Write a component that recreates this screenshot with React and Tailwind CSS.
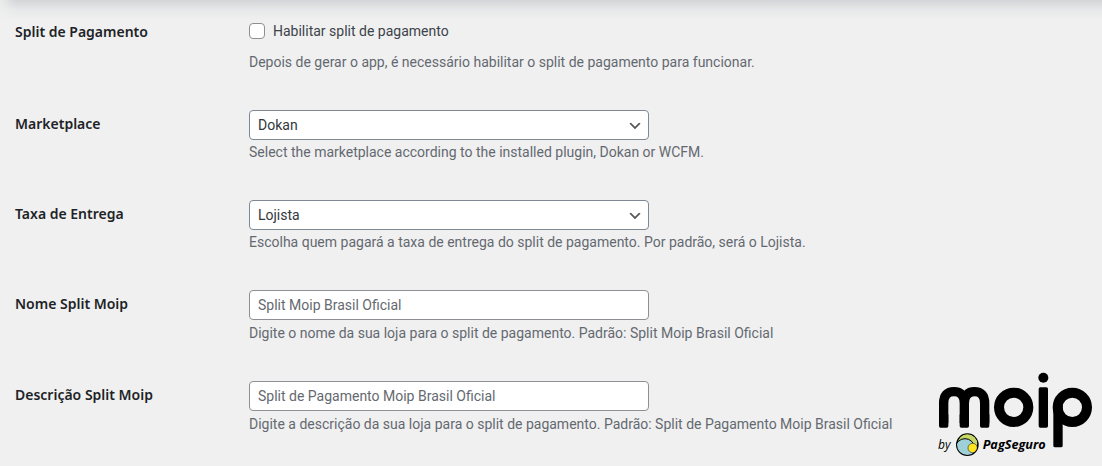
function SelectField({ id, value, options }) {
  return (
    <div className="relative w-full max-w-[400px]">
      <select
        id={id}
        defaultValue={value}
        className="block h-[30px] w-full appearance-none rounded-[4px] border border-[#7e8993] bg-white pl-2 pr-6 text-[14px] leading-[28px] text-[#32373c]"
      >
        {options.map((option) => (
          <option key={option}>{option}</option>
        ))}
      </select>
      <svg
        aria-hidden="true"
        viewBox="0 0 20 20"
        className="pointer-events-none absolute right-[6px] top-[8px] h-4 w-4"
      >
        <path d="M5 6l5 5 5-5 2 1-7 7-7-7 2-1z" fill="#555" />
      </svg>
    </div>
  );
}

function TextField({ id, placeholder }) {
  return (
    <input
      id={id}
      type="text"
      placeholder={placeholder}
      className="mb-px block h-[30px] w-full max-w-[400px] rounded-[4px] border border-[#8c8f94] bg-white px-2 text-[14px] text-[#2c3338] placeholder:text-[#646970] placeholder:opacity-100"
    />
  );
}

function Row({ id, label, description, children }) {
  return (
    <div className="flex">
      <div className="w-[234px] shrink-0 pt-1">
        <label
          htmlFor={id}
          className="block font-['Noto_Sans',sans-serif] text-[14px] font-semibold leading-[20px] text-[#1d2327]"
        >
          {label}
        </label>
      </div>
      <div className="min-w-0 flex-1">
        {children}
        <p className="text-[14px] leading-[24px] text-[#646970]">{description}</p>
      </div>
    </div>
  );
}

function MoipLogo() {
  return (
    <svg
      role="img"
      aria-label="moip by PagSeguro"
      viewBox="0 0 546 318"
      className="absolute bottom-0 right-0 h-[106px] w-[182px]"
    >
      <g fill="none" stroke="#000" strokeWidth="28" strokeLinejoin="round">
        <path d="M71 190V130C71 106 82 95 102 95C122 95 133 106 133 130V190M133 130C133 106 144 95 163 95C183 95 194 106 194 130V190" />
        <circle cx="281" cy="142" r="44" strokeWidth="30" />
        <circle cx="457" cy="142" r="44" strokeWidth="30" />
      </g>
      <rect x="57" y="160" width="28" height="43" rx="5" />
      <rect x="119" y="160" width="28" height="43" rx="5" />
      <rect x="180" y="160" width="28" height="43" rx="5" />
      <rect x="356" y="82" width="28" height="121" rx="5" />
      <rect x="400" y="135" width="28" height="127" rx="5" />
      <circle cx="370" cy="53" r="15" />
      <circle cx="142" cy="254" r="34" />
      <clipPath id="badge">
        <circle cx="142" cy="254" r="31" />
      </clipPath>
      <g clipPath="url(#badge)">
        <circle cx="143" cy="250" r="29" fill="#c5d866" />
        <circle cx="135" cy="265" r="29" fill="#9dd0d8" stroke="#000" strokeWidth="3" />
        <circle cx="158" cy="264" r="14" fill="#ffe51f" stroke="#333" strokeWidth="2" />
      </g>
      <text x="54" y="267" className="font-['Open_Sans',sans-serif] text-[36px] italic">
        by
      </text>
      <text x="188" y="266" className="font-['Open_Sans',sans-serif] text-[38px] font-bold italic">
        PagSeguro
      </text>
    </svg>
  );
}

export default function App() {
  return (
    <main className="relative min-h-screen overflow-hidden bg-[#f0f0f0] font-[Roboto,sans-serif]">
      <div className="h-5 bg-linear-to-b from-[#d4d5d8] via-[#e7e8e9] to-[#f0f0f0]">
        <div className="h-full w-4 bg-linear-to-r from-[#f0f0f0]/80 to-[#f0f0f0]/0" />
      </div>
      <form className="flex flex-col gap-9 px-[15px]">
        <div className="flex">
          <div className="w-[234px] shrink-0 pt-[2px] font-['Noto_Sans',sans-serif] text-[14px] font-semibold leading-[20px] text-[#1d2327]">
            Split de Pagamento
          </div>
          <div className="min-w-0 flex-1">
            <label className="flex h-[22px] items-center gap-2 text-[14px] text-[#3c434a]">
              <input
                type="checkbox"
                className="h-4 w-4 appearance-none rounded-[4px] border border-[#8c8f94] bg-white checked:bg-[#2271b1]"
              />
              Habilitar split de pagamento
            </label>
            <p className="pt-2 text-[14px] leading-[24px] text-[#646970]">
              Depois de gerar o app, é necessário habilitar o split de pagamento para funcionar.
            </p>
          </div>
        </div>
        <Row
          id="marketplace"
          label="Marketplace"
          description="Select the marketplace according to the installed plugin, Dokan or WCFM."
        >
          <SelectField id="marketplace" value="Dokan" options={["Dokan", "WCFM"]} />
        </Row>
        <Row
          id="taxa"
          label="Taxa de Entrega"
          description="Escolha quem pagará a taxa de entrega do split de pagamento. Por padrão, será o Lojista."
        >
          <SelectField id="taxa" value="Lojista" options={["Lojista", "Marketplace"]} />
        </Row>
        <Row
          id="nome"
          label="Nome Split Moip"
          description="Digite o nome da sua loja para o split de pagamento. Padrão: Split Moip Brasil Oficial"
        >
          <TextField id="nome" placeholder="Split Moip Brasil Oficial" />
        </Row>
        <Row
          id="descricao"
          label="Descrição Split Moip"
          description="Digite a descrição da sua loja para o split de pagamento. Padrão: Split de Pagamento Moip Brasil Oficial"
        >
          <TextField id="descricao" placeholder="Split de Pagamento Moip Brasil Oficial" />
        </Row>
      </form>
      <MoipLogo />
    </main>
  );
}
